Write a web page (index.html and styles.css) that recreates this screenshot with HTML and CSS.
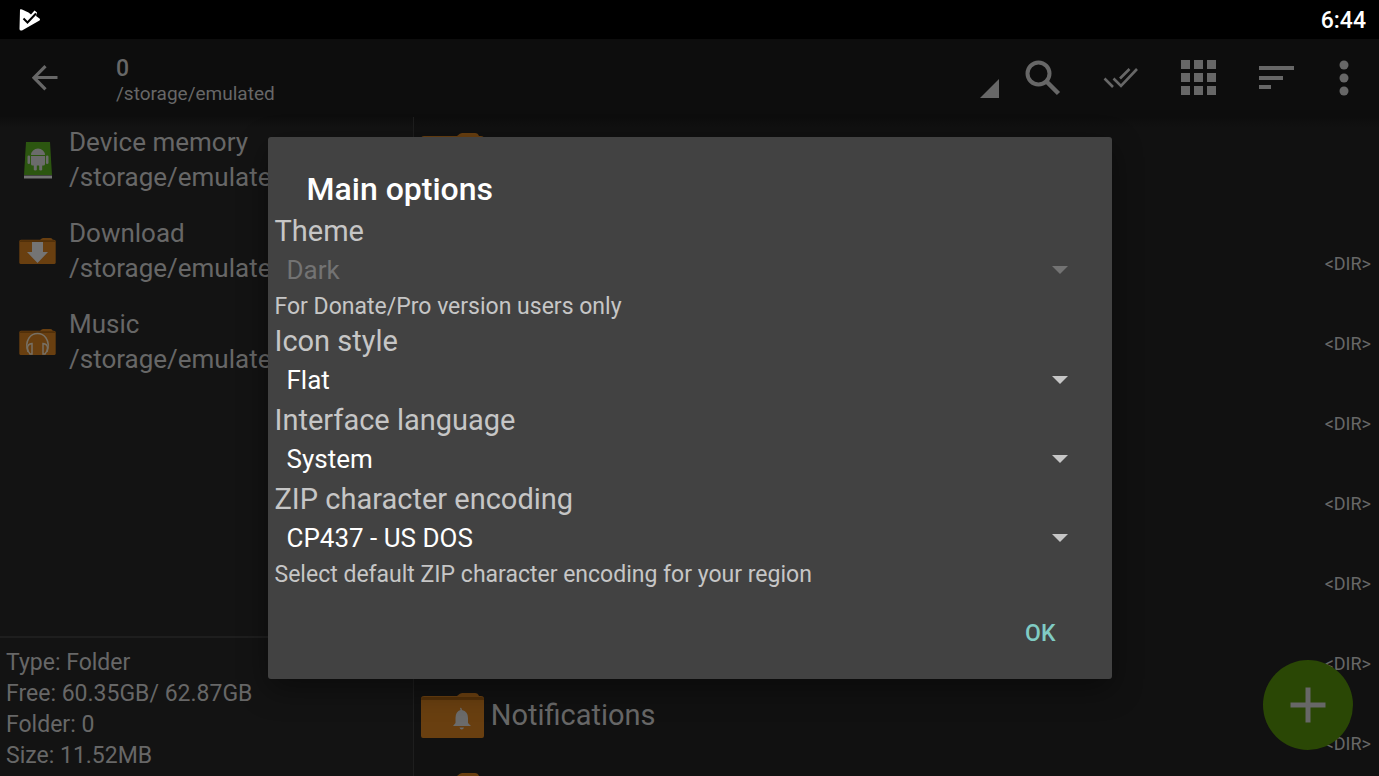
FILE: index.html
```html
<!DOCTYPE html>
<html lang="en">
<head>
<meta charset="utf-8">
<title>Main options</title>
<link rel="stylesheet" href="styles.css">
</head>
<body>
<svg class="defs" aria-hidden="true">
  <symbol id="folder" viewBox="0 0 63 45">
    <path d="M0 6Q0 3 3 3H36Q39 0 41 0H54Q57 0 58 3H60Q63 3 63 6V43Q63 45 61 45H2Q0 45 0 43Z" fill="#693f10"/>
    <path d="M0 7Q0 4 3 4H60Q63 4 63 7Z" fill="#523009"/>
  </symbol>
</svg>
<header class="status">
  <svg width="22" height="22" viewBox="0 0 22 22"><path d="M1 0.500Q2 -0.200 3 0.500L9.500 3.600 12 5.500 15.500 1.500 18 3.500 17 7 20.500 9.500Q21.500 10.500 20.500 11.500L3 21.500Q0.500 22 0.500 20Z" fill="#fff"/><path d="M4.500 9.500L8.500 13.500L17 4.500" fill="none" stroke="#000" stroke-width="2"/></svg>
  <time class="clock">6:44</time>
</header>
<div class="screen">
  <nav class="toolbar">
    <button class="tool back" aria-label="Back"><svg width="26" height="26" viewBox="0 0 26 26"><path d="M25.500 12.500H2M13.500 1.200L2 12.700L13.500 24.300" fill="none" stroke="currentColor" stroke-width="3.200"/></svg></button>
    <div class="path">
      <div class="path-name">0</div>
      <div class="path-dir">/storage/emulated</div>
    </div>
    <svg class="corner" width="19" height="19" viewBox="0 0 19 19"><path d="M19 0V19H0Z" fill="currentColor"/></svg>
    <button class="tool" aria-label="Search"><svg width="36" height="36" viewBox="0 0 36 36"><circle cx="13.500" cy="13.500" r="11" fill="none" stroke="currentColor" stroke-width="4"/><path d="M21.500 21.500L33.500 33.500" stroke="currentColor" stroke-width="4.500"/></svg></button>
    <button class="tool" aria-label="Select all"><svg width="36" height="22" viewBox="0 0 36 22"><path d="M1.500 11.500L10 20M10.500 11.500L18 19L34 2M17 11.500L26.500 2" fill="none" stroke="currentColor" stroke-width="2.600"/></svg></button>
    <button class="tool" aria-label="View mode"><svg width="36" height="36" viewBox="0 0 36 36"><path d="M0 0h9v9H0zM13 0h9v9h-9zM26 0h9v9h-9zM0 13h9v9H0zM13 13h9v9h-9zM26 13h9v9h-9zM0 26h9v9H0zM13 26h9v9h-9zM26 26h9v9h-9z" fill="currentColor"/></svg></button>
    <button class="tool" aria-label="Sort"><svg width="36" height="24" viewBox="0 0 36 24"><path d="M0 0h35v4H0zM0 10h24v4H0zM0 19h12v4H0z" fill="currentColor"/></svg></button>
    <button class="tool more" aria-label="More"><svg width="10" height="36" viewBox="0 0 10 36"><g fill="currentColor"><circle cx="5" cy="5" r="4.500"/><circle cx="5" cy="18" r="4.500"/><circle cx="5" cy="31" r="4.500"/></g></svg></button>
  </nav>
  <div class="panes">
    <aside class="sidebar">
      <ul class="places">
        <li class="place">
          <svg width="37" height="37" viewBox="0 0 37 37"><path d="M7 0H31L33 33H5Z" fill="#2c5610"/><path d="M5 33.500H33V36.500H5Z" fill="#737373"/><g fill="#6b6b6b"><path d="M12 13A7 6.500 0 0 1 26 13ZM12 14H26V22Q26 23.500 24.500 23.500H13.500Q12 23.500 12 22Z"/><rect x="8.500" y="13.500" width="2.600" height="8.500" rx="1.300"/><rect x="26.900" y="13.500" width="2.600" height="8.500" rx="1.300"/><rect x="14.800" y="22" width="3" height="6.500" rx="1.300"/><rect x="20.200" y="22" width="3" height="6.500" rx="1.300"/></g></svg>
          <div>Device memory<br>/storage/emulated</div>
        </li>
        <li class="place">
          <svg width="37" height="37" viewBox="0 0 37 37"><use href="#folder" y="5" width="37" height="26"/><path d="M13 9H24V19H29L18.500 30 8 19H13Z" fill="#747474"/></svg>
          <div>Download<br>/storage/emulated</div>
        </li>
        <li class="place">
          <svg width="37" height="37" viewBox="0 0 37 37"><use href="#folder" y="5" width="37" height="26"/><g fill="none" stroke="#777064" stroke-width="1.500"><path d="M9 28Q6 20 10 14Q13 9.500 18.500 9.500Q24 9.500 27 14Q31 20 28 28"/><path d="M13 19.500V30H11Q8.500 27 8.500 24Q8.500 20 13 19.500ZM24 19.500V30H26Q28.500 27 28.500 24Q28.500 20 24 19.500Z"/></g></svg>
          <div>Music<br>/storage/emulated</div>
        </li>
      </ul>
      <div class="info">
        <div>Type: Folder</div>
        <div>Free: 60.35GB/ 62.87GB</div>
        <div>Folder: 0</div>
        <div>Size: 11.52MB</div>
      </div>
    </aside>
    <main class="files">
      <div class="file"><svg width="63" height="45"><use href="#folder"/></svg></div>
      <div class="file"><span class="kind">&lt;DIR&gt;</span></div>
      <div class="file"><span class="kind">&lt;DIR&gt;</span></div>
      <div class="file"><span class="kind">&lt;DIR&gt;</span></div>
      <div class="file"><span class="kind">&lt;DIR&gt;</span></div>
      <div class="file"><span class="kind">&lt;DIR&gt;</span></div>
      <div class="file"><span class="kind">&lt;DIR&gt;</span></div>
      <div class="file"><svg width="63" height="45" viewBox="0 0 63 45"><use href="#folder"/><path d="M39 15Q40 14.500 40.500 15.200L41 17Q47 18.500 47 25V30L50 33H32L34.500 30V25Q34.500 18.500 39.500 17ZM38.500 34.500H43Q42.500 36.500 40.700 36.500Q39 36.500 38.500 34.500Z" fill="#6b6b6b"/></svg><span class="name">Notifications</span><span class="kind">&lt;DIR&gt;</span></div>
      <div class="file"><svg width="63" height="45"><use href="#folder"/></svg></div>
    </main>
  </div>
  <button class="fab" aria-label="Add"><svg width="36" height="36" viewBox="0 0 36 36"><path d="M18 0.500V35.500M0.500 18H35.500" stroke="currentColor" stroke-width="5"/></svg></button>
  <div class="overlay">
    <form class="dialog" role="dialog" aria-labelledby="title">
      <h1 class="title" id="title">Main options</h1>
      <label class="label" for="theme">Theme</label>
      <div class="picker disabled"><select id="theme" disabled><option>Dark</option></select><svg class="caret" width="16" height="8" viewBox="0 0 16 8"><path d="M0 0H16L8 8Z" fill="currentColor"/></svg></div>
      <p class="note">For Donate/Pro version users only</p>
      <label class="label" for="icons">Icon style</label>
      <div class="picker"><select id="icons"><option>Flat</option></select><svg class="caret" width="16" height="8" viewBox="0 0 16 8"><path d="M0 0H16L8 8Z" fill="currentColor"/></svg></div>
      <label class="label" for="language">Interface language</label>
      <div class="picker"><select id="language"><option>System</option></select><svg class="caret" width="16" height="8" viewBox="0 0 16 8"><path d="M0 0H16L8 8Z" fill="currentColor"/></svg></div>
      <label class="label" for="encoding">ZIP character encoding</label>
      <div class="picker"><select id="encoding"><option>CP437 - US DOS</option></select><svg class="caret" width="16" height="8" viewBox="0 0 16 8"><path d="M0 0H16L8 8Z" fill="currentColor"/></svg></div>
      <p class="note">Select default ZIP character encoding for your region</p>
      <div class="actions"><button type="button" class="ok">OK</button></div>
    </form>
  </div>
</div>
</body>
</html>
```
FILE: styles.css
```css
* {
  box-sizing: border-box;
}

body {
  margin: 0;
  height: 100vh;
  display: flex;
  flex-direction: column;
  overflow: hidden;
  background: #111;
  color: #676767;
  font-family: Roboto, "Noto Sans", sans-serif;
  font-size: 26px;
}

button,
select {
  border: 0;
  background: none;
  color: inherit;
  font: inherit;
}

svg {
  display: block;
  flex: none;
}

.defs {
  position: absolute;
  width: 0;
  height: 0;
}

.status {
  flex: none;
  display: flex;
  align-items: center;
  justify-content: space-between;
  height: 39px;
  padding: 1px 13px 0 19px;
  background: #000;
  color: #fff;
}

.clock {
  font-size: 23px;
  font-weight: 500;
}

.screen {
  position: relative;
  flex: 1;
  min-height: 0;
  display: flex;
  flex-direction: column;
}

.toolbar {
  flex: none;
  display: flex;
  align-items: center;
  height: 78px;
  padding-right: 7px;
  background: #0d0d0d;
}

.tool {
  display: flex;
  align-items: center;
  justify-content: center;
  width: 78px;
  height: 78px;
  padding: 0;
}

.back {
  width: 90px;
}

.more {
  width: 56px;
}

.path {
  flex: 1;
  padding: 4px 0 0 26px;
}

.path-name {
  font-size: 23px;
  font-weight: 500;
  line-height: 26px;
}

.path-dir {
  font-size: 19px;
  line-height: 23px;
}

.corner {
  align-self: flex-end;
  margin: 0 5px 19px 0;
}

.panes {
  flex: 1;
  min-height: 0;
  display: flex;
}

.sidebar {
  width: 30%;
  display: flex;
  flex-direction: column;
  justify-content: space-between;
  border-right: 1px solid #1e1e1e;
  background: linear-gradient(#0e0e0e, #131313 10px);
}

.places {
  display: flex;
  flex-direction: column;
  gap: 21px;
  margin: 0;
  padding: 8px 0 0 19px;
  list-style: none;
}

.place {
  display: flex;
  align-items: center;
  gap: 13px;
  line-height: 35px;
  white-space: nowrap;
}

.info {
  padding: 9px 6px 5px;
  border-top: 2px solid #1e1e1e;
  font-size: 23px;
  line-height: 31px;
}

.files {
  flex: 1;
  overflow: hidden;
  padding-top: 11px;
  background: linear-gradient(#0d0d0d, #111 10px);
}

.file {
  display: flex;
  align-items: flex-start;
  gap: 7px;
  height: 80px;
  padding: 5px 8px 0 7px;
}

.name {
  font-size: 29px;
  line-height: 44px;
}

.kind {
  align-self: flex-end;
  margin-left: auto;
  padding-bottom: 13px;
  font-size: 18px;
  line-height: 22px;
}

.fab {
  position: absolute;
  right: 26px;
  bottom: 26px;
  display: flex;
  align-items: center;
  justify-content: center;
  width: 90px;
  height: 90px;
  border-radius: 50%;
  background: #2a4705;
}

.overlay {
  position: absolute;
  inset: 0;
  display: flex;
  align-items: center;
  justify-content: center;
}

.dialog {
  width: 90%;
  max-width: 844px;
  padding: 33px 7px 21px;
  border-radius: 3px;
  background: #424242;
  box-shadow: 0 10px 30px rgba(0, 0, 0, 0.4);
  color: #c6c6c6;
}

.title {
  margin: 0 0 6px;
  padding-left: 32px;
  color: #fff;
  font-size: 32px;
  font-weight: 500;
  line-height: 38px;
}

.label {
  display: block;
  font-size: 29px;
  line-height: 34px;
}

.picker {
  display: grid;
  align-items: center;
}

.picker select {
  grid-area: 1 / 1;
  appearance: none;
  height: 45px;
  padding: 0 50px 0 12px;
  color: #fff;
  opacity: 1;
}

.caret {
  grid-area: 1 / 1;
  justify-self: end;
  margin-right: 37px;
  pointer-events: none;
}

.disabled select,
.disabled .caret {
  color: #737373;
}

.note {
  margin: 0 0 4px;
  font-size: 23px;
  line-height: 27px;
}

.actions {
  display: flex;
  justify-content: flex-end;
  padding: 18px 36px 0 0;
}

.ok {
  height: 48px;
  padding: 0 13px;
  color: #80cbc4;
  font-size: 23px;
  font-weight: 500;
}
```
